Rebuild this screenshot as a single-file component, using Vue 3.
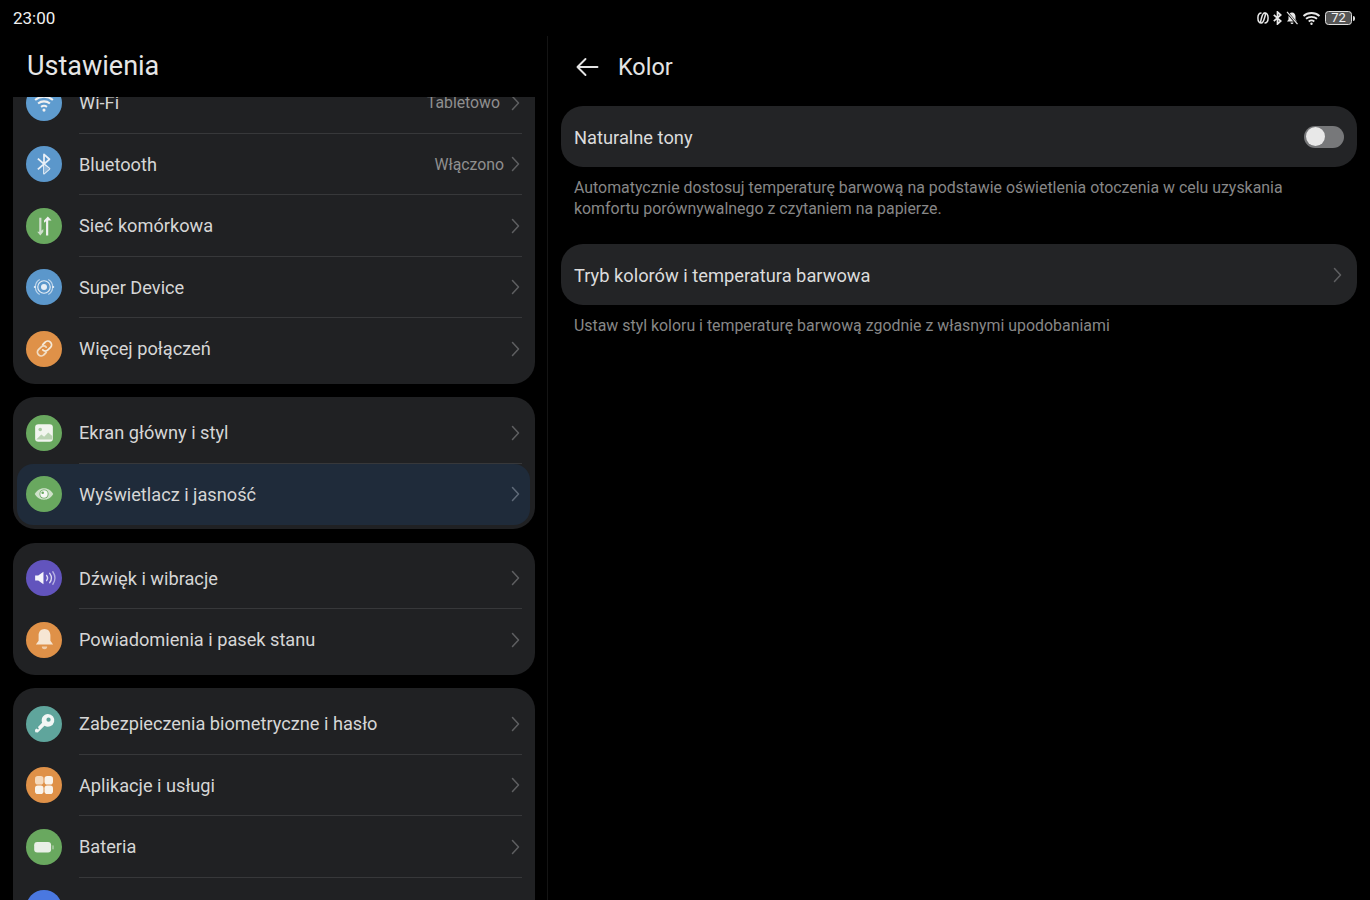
<script setup>
const groups = [
  [
    { label: 'Wi-Fi', value: 'Tabletowo', valueWide: true, icon: 'wifi', color: '#5f9ccf' },
    { label: 'Bluetooth', value: 'Włączono', icon: 'bt', color: '#5b97cb' },
    { label: 'Sieć komórkowa', icon: 'cell', color: '#69a85f' },
    { label: 'Super Device', icon: 'super', color: '#5b97cb' },
    { label: 'Więcej połączeń', icon: 'link', color: '#df9148' },
  ],
  [
    { label: 'Ekran główny i styl', icon: 'image', color: '#69a85f' },
    { label: 'Wyświetlacz i jasność', icon: 'eye', color: '#69a85f', active: true },
  ],
  [
    { label: 'Dźwięk i wibracje', icon: 'sound', color: '#6254bd' },
    { label: 'Powiadomienia i pasek stanu', icon: 'bell', color: '#df9148' },
  ],
  [
    { label: 'Zabezpieczenia biometryczne i hasło', icon: 'key', color: '#5fa59c' },
    { label: 'Aplikacje i usługi', icon: 'apps', color: '#df9148' },
    { label: 'Bateria', icon: 'battery', color: '#69a85f' },
    { label: '', icon: 'none', color: '#4a78e0' },
  ],
]
</script>

<template>
  <div class="screen">
    <header class="status">
      <span class="time">23:00</span>
      <div class="status-icons">
        <svg width="12" height="14" viewBox="0 0 12 14" fill="none" stroke="#e8e8e8" stroke-width="1.500">
          <path d="M4.500 2C2 2 .9 4.500.9 7s1.100 5 3.600 5c1.500 0 2.200-2.500 3-5s1.500-5 0-5C6 2 5.200 4.500 4.500 7s-1.500 5 0 5" />
          <path d="M7.500 2C10 2 11.100 4.500 11.100 7s-1.100 5-3.600 5" />
        </svg>
        <svg width="9" height="14" viewBox="0 0 9 14" fill="none" stroke="#e8e8e8" stroke-width="1.700">
          <path d="M.8 3.800l7 6.200-3.300 3V1l3.300 3-7 6.200" />
        </svg>
        <svg width="12" height="14" viewBox="0 0 12 14" fill="#e8e8e8">
          <path d="M6 1.500c2.200 0 3.500 1.700 3.500 4v3l1.500 2H1l1.500-2v-3c0-2.300 1.300-4 3.500-4zM4.500 11.500h3a1.500 1.500 0 0 1-3 0z" />
          <path d="M.5 .5l11 13" stroke="#000" stroke-width="2.400" />
          <path d="M1 .8l10.500 12.400" stroke="#e8e8e8" stroke-width="1.200" />
        </svg>
        <svg width="19" height="14" viewBox="0 0 19 14" fill="none" stroke="#e8e8e8" stroke-width="1.800">
          <path d="M1.500 5C6 1 13 1 17.500 5M4 7.800c3-2.600 8-2.600 11 0M6.700 10.500c1.700-1.300 3.900-1.300 5.600 0" />
          <circle cx="9.500" cy="12.800" r="1.200" fill="#e8e8e8" stroke="none" />
        </svg>
        <span class="battery">
          <span class="battery-body">72</span>
          <span class="battery-tip"></span>
        </span>
      </div>
    </header>

    <main class="panes">
      <section class="left">
        <h1 class="title">Ustawienia</h1>
        <div class="scroller">
          <div class="list">
            <div v-for="(group, g) in groups" :key="g" class="card">
              <div
                v-for="(item, i) in group"
                :key="i"
                class="row"
                :class="{ active: item.active }"
              >
                <span class="ico" :style="{ background: item.color }">
                  <svg v-if="item.icon === 'wifi'" width="26" height="26" viewBox="0 0 22 22" fill="none" stroke="#f1f1f1" stroke-width="1.700">
                    <path d="M3.500 8.500c4.200-3.700 10.800-3.700 15 0M6 11.500c2.900-2.500 7.100-2.500 10 0M8.500 14.300c1.500-1.200 3.500-1.200 5 0" />
                    <circle cx="11" cy="17" r="1.300" fill="#f1f1f1" stroke="none" />
                  </svg>
                  <svg v-else-if="item.icon === 'bt'" width="30" height="30" viewBox="0 0 22 22" fill="none" stroke="#e9f0f7" stroke-width="1.300" stroke-linejoin="round">
                    <path d="M6.500 7l8.500 7.500-4 3.500V4l4 3.500L6.500 15" />
                    <path d="M11 11.500V18l4-3.500z" fill="#8fb7da" stroke="none" />
                  </svg>
                  <svg v-else-if="item.icon === 'cell'" width="30" height="30" viewBox="0 0 22 22" fill="#f1f1f1">
                    <path d="M7.500 5h1.600v9.500l1.400-1.300v2l-2.200 2.800-2.300-2.800 1.500.1z" opacity=".75" />
                    <path d="M12.500 18V7.500L11 8.700V7l2.800-3 2.700 3h-2.400v11z" />
                  </svg>
                  <svg v-else-if="item.icon === 'super'" width="28" height="28" viewBox="0 0 26 26" fill="none" stroke="#e6eef6" stroke-width="1.100">
                    <circle cx="13" cy="13" r="2.800" fill="#e6eef6" stroke="none" />
                    <circle cx="13" cy="13" r="5.800" />
                    <path d="M5 13a8 8 0 0 1 4-7M21 13a8 8 0 0 1-4 7M5 13a8 8 0 0 0 4 7M21 13a8 8 0 0 0-4-7" opacity=".7" />
                    <circle cx="4.500" cy="13" r="1" fill="#e6eef6" stroke="none" />
                    <circle cx="21.500" cy="13" r="1" fill="#e6eef6" stroke="none" />
                  </svg>
                  <svg v-else-if="item.icon === 'link'" width="25" height="25" viewBox="0 0 22 22" fill="none" stroke="#f5ead9" stroke-width="1.600" stroke-linecap="round">
                    <path d="M9.500 7.500l2-2a3.200 3.200 0 0 1 4.800 4.500l-2.300 2.300a3.200 3.200 0 0 1-4.500 0" />
                    <path d="M12.500 14.500l-2 2a3.200 3.200 0 0 1-4.800-4.500L8 9.700a3.200 3.200 0 0 1 4.500 0" opacity=".85" />
                  </svg>
                  <svg v-else-if="item.icon === 'image'" width="26" height="26" viewBox="0 0 22 22">
                    <rect x="3.500" y="3.500" width="15" height="15" rx="2.800" fill="#f1f5ef" />
                    <circle cx="7.800" cy="8" r="1.500" fill="#a9cba3" />
                    <path d="M4.500 16.500l4.200-4.200 2.400 1.800 3.500-3.600 3.400 3v3z" fill="#b9d3b3" />
                  </svg>
                  <svg v-else-if="item.icon === 'eye'" width="24" height="24" viewBox="0 0 22 22">
                    <path d="M2.500 11C5 7 8 5.800 11 5.800S17 7 19.500 11C17 15 14 16.200 11 16.200S5 15 2.500 11z" fill="#cfe2ca" />
                    <circle cx="11" cy="11" r="4.200" fill="#69a85f" />
                    <circle cx="11" cy="11" r="3.400" fill="#f6f8f5" />
                    <circle cx="9.800" cy="9.800" r="1.200" fill="#69a85f" />
                  </svg>
                  <svg v-else-if="item.icon === 'sound'" width="25" height="24" viewBox="0 0 24 22" fill="none" stroke="#dcd9f2" stroke-width="1.300" stroke-linecap="round">
                    <path d="M3 8.500h3L11 5v12l-5-3.500H3z" fill="#f4f3fb" stroke="none" />
                    <path d="M14 8.500c1.200 1.500 1.200 3.500 0 5M17 6.500c2 2.700 2 6.300 0 9" />
                    <path d="M20 5c2.500 3.700 2.500 8.300 0 12" opacity=".7" />
                  </svg>
                  <svg v-else-if="item.icon === 'bell'" width="27" height="27" viewBox="0 0 22 22" fill="#f6e6d3">
                    <path d="M11 2.500c3 0 4.800 2.300 4.800 5.200v4.300l2.200 3H4l2.200-3V7.700c0-2.900 1.800-5.200 4.800-5.200z" />
                    <path d="M8.800 16.700h4.400a2.200 2.200 0 0 1-4.400 0z" opacity=".7" />
                  </svg>
                  <svg v-else-if="item.icon === 'key'" width="27" height="27" viewBox="0 0 24 24" fill="#f2f6f5">
                    <path fill-rule="evenodd" d="M15 3.500a5.700 5.700 0 1 1-3 10.500l-6 6-2.200-.2-.3-2 1.200-1.300 1.600.8.700-.7-.8-1.600 3.700-3.700A5.700 5.700 0 0 1 15 3.500zm.6 3.200a1.900 1.900 0 1 0 0 3.800 1.900 1.900 0 0 0 0-3.800z" />
                  </svg>
                  <svg v-else-if="item.icon === 'apps'" width="22" height="22" viewBox="0 0 22 22">
                    <rect x="2" y="2" width="8.500" height="8.500" rx="2.800" fill="#f5d9bb" />
                    <rect x="11.500" y="2" width="8.500" height="8.500" rx="2.800" fill="#f9f3ea" />
                    <rect x="2" y="11.500" width="8.500" height="8.500" rx="2.800" fill="#f9f3ea" />
                    <rect x="11.500" y="11.500" width="8.500" height="8.500" rx="2.800" fill="#f9f3ea" />
                  </svg>
                  <svg v-else-if="item.icon === 'battery'" width="24" height="24" viewBox="0 0 22 22">
                    <rect x="2" y="6.500" width="15.500" height="9.500" rx="2.800" fill="#e9efe7" />
                    <rect x="18.500" y="9.300" width="1.500" height="4" rx=".7" fill="#a6c9a0" />
                  </svg>
                </span>
                <span class="label">{{ item.label }}</span>
                <span v-if="item.value" class="value" :class="{ 'value-wide': item.valueWide }">{{ item.value }}</span>
                <svg class="chev" width="9" height="16" viewBox="0 0 9 16" fill="none" stroke="currentColor" stroke-width="1.500" stroke-linecap="round" stroke-linejoin="round">
                  <path d="M1.500 1.500L7.500 8l-6 6.500" />
                </svg>
              </div>
            </div>
          </div>
        </div>
      </section>

      <section class="right">
        <div class="detail-head">
          <svg width="24" height="20" viewBox="0 0 24 20" fill="none" stroke="#e4e4e4" stroke-width="1.900" stroke-linecap="round" stroke-linejoin="round">
            <path d="M22.500 10H2.500M10.500 2l-8 8 8 8" />
          </svg>
          <span class="detail-title">Kolor</span>
        </div>
        <div class="panel">
          <span class="panel-text">Naturalne tony</span>
          <span class="toggle"><span class="knob"></span></span>
        </div>
        <p class="desc">Automatycznie dostosuj temperaturę barwową na podstawie oświetlenia otoczenia w celu uzyskania komfortu porównywalnego z czytaniem na papierze.</p>
        <div class="panel panel-second">
          <span class="panel-text">Tryb kolorów i temperatura barwowa</span>
          <svg class="chev" width="9" height="16" viewBox="0 0 9 16" fill="none" stroke="currentColor" stroke-width="1.500" stroke-linecap="round" stroke-linejoin="round">
            <path d="M1.500 1.500L7.500 8l-6 6.500" />
          </svg>
        </div>
        <p class="desc">Ustaw styl koloru i temperaturę barwową zgodnie z własnymi upodobaniami</p>
      </section>
    </main>
  </div>
</template>

<style>
html, body { margin: 0; background: #000; overflow: hidden; }
</style>

<style scoped>
.screen {
  width: 1370px;
  height: 900px;
  background: #000;
  color: #d9d9d9;
  font-family: Roboto, "Noto Sans", sans-serif;
  display: flex;
  flex-direction: column;
  overflow: hidden;
}
.status {
  height: 36px;
  flex: none;
  display: flex;
  align-items: center;
  justify-content: space-between;
  padding: 0 15px 0 13px;
}
.time { font-size: 17px; color: #f0f0f0; }
.status-icons { display: flex; align-items: center; gap: 4px; }
.battery { display: flex; align-items: center; gap: 1px; }
.battery-body {
  width: 25px;
  height: 12px;
  border: 1px solid #e0e0e0;
  border-radius: 3.500px;
  background: #555;
  color: #f2f2f2;
  font-size: 13px;
  line-height: 12px;
  text-align: center;
}
.battery-tip { width: 2px; height: 5px; background: #ddd; border-radius: 0 2px 2px 0; }
.panes { flex: 1; display: flex; min-height: 0; }
.left {
  width: 547px;
  flex: none;
  display: flex;
  flex-direction: column;
  border-right: 1px solid #141414;
}
.title {
  margin: 0;
  height: 61px;
  flex: none;
  padding: 14px 0 0 27px;
  box-sizing: border-box;
  font-size: 27px;
  line-height: 32px;
  font-weight: 400;
  color: #e6e6e6;
}
.scroller { flex: 1; min-height: 0; overflow: hidden; padding: 0 12px 0 13px; }
.list { margin-top: -30px; display: flex; flex-direction: column; gap: 13.500px; }
.card { background: #202123; border-radius: 22px; padding: 5px 5px 4px 4px; }
.row {
  height: 61.500px;
  display: flex;
  align-items: center;
  padding: 0 10px 0 9px;
  position: relative;
  box-sizing: border-box;
  border-radius: 16px;
}
.row::after {
  content: "";
  position: absolute;
  left: 62px;
  right: 8px;
  bottom: 0;
  height: 1px;
  background: #37383a;
}
.row:last-child::after, .row.active::after { display: none; }
.row.active { background: #1f2b3a; }
.ico {
  width: 36px;
  height: 36px;
  border-radius: 50%;
  flex: none;
  display: flex;
  align-items: center;
  justify-content: center;
  margin-right: 17px;
}
.label { font-size: 18.200px; color: #d6d6d6; flex: 1; white-space: nowrap; }
.value { font-size: 15.800px; color: #8f8f8f; margin-right: 7px; }
.value-wide { margin-right: 11px; }
.chev { color: #5e5f61; flex: none; }
.row.active .chev { color: #5f6a78; }
.right { flex: 1; min-width: 0; padding: 0 13px; }
.detail-head { height: 62px; margin-bottom: 8px; display: flex; align-items: center; gap: 19px; padding-left: 14px; box-sizing: border-box; }
.detail-title { font-size: 23.400px; color: #e4e4e4; }
.panel {
  height: 61px;
  background: #232426;
  border-radius: 22px;
  display: flex;
  align-items: center;
  justify-content: space-between;
  padding: 0 13px 0 13px;
  box-sizing: border-box;
}
.panel-second { padding-right: 15px; }
.panel-text { font-size: 18.300px; color: #dcdcdc; padding-top: 1px; }
.toggle {
  width: 40px;
  height: 22px;
  border-radius: 11px;
  background: #77787a;
  display: flex;
  align-items: center;
  padding-left: 2px;
  box-sizing: border-box;
}
.knob { width: 19px; height: 19px; border-radius: 50%; background: #e8e8e8; }
.desc {
  margin: 10px 0 0;
  padding: 0 70px 0 13px;
  font-size: 15.900px;
  line-height: 21px;
  color: #878787;
  height: 67px;
}
.desc:last-child { height: auto; }
</style>
